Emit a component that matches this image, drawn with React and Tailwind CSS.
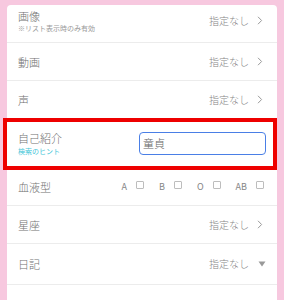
import React from "react";

const Chevron = () => (
  <svg width="6" height="9" viewBox="0 0 6 9" className="ml-[8px]">
    <polyline points="1,0.8 4.6,4.5 1,8.2" fill="none" stroke="#999" strokeWidth="1" />
  </svg>
);

const Tri = () => (
  <svg width="8" height="6" viewBox="0 0 8 6" className="ml-[9px]">
    <polygon points="0.5,0.5 7.5,0.5 4,5.5" fill="#999" />
  </svg>
);

const Value = ({ tri }) => (
  <div className="flex items-center">
    <span className="text-[10px] leading-[14px] text-[#858585] font-light">指定なし</span>
    {tri ? <Tri /> : <Chevron />}
  </div>
);

const Box = () => (
  <span className="inline-block w-[8px] h-[8px] border border-[#bdbdbd] rounded-[1px] bg-white ml-[9px] mb-[4px]" />
);

export default function App() {
  return (
    <div
      className="w-[284px] h-[300px] bg-[#f7c8df] overflow-hidden pt-[5px] px-[7px]"
      style={{ fontFamily: '"Noto Sans CJK JP", "Noto Sans", sans-serif' }}
    >
      <div className="bg-white rounded-t-[4px] h-[400px]">
        <div className="h-[38px] border-b border-[#ececec] flex items-center justify-between pl-[11px] pr-[14px] pb-[6px]">
          <div className="flex flex-col">
            <span className="text-[11px] leading-[14px] text-[#717171] font-light">画像</span>
            <span className="text-[7px] leading-[10px] text-[#9a9a9a]">※リスト表示時のみ有効</span>
          </div>
          <Value />
        </div>
        <div className="h-[38px] border-b border-[#ececec] flex items-center justify-between pl-[11px] pr-[14px]">
          <span className="text-[11px] leading-[14px] text-[#717171] font-light">動画</span>
          <Value />
        </div>
        <div className="h-[38px] border-b border-[#ececec] flex items-center justify-between pl-[11px] pr-[14px]">
          <span className="text-[11px] leading-[14px] text-[#717171] font-light">声</span>
          <Value />
        </div>
        <div className="relative h-[50px] border-b border-[#ececec] flex items-center justify-between pl-[11px] pr-[11px]">
          <div className="flex flex-col">
            <span className="text-[11px] leading-[15px] text-[#717171] font-light">自己紹介</span>
            <span className="text-[7px] leading-[10px] text-[#3fc6d8]">検索のヒント</span>
          </div>
          <div className="w-[127px] h-[23px] border border-[#4a7fe6] rounded-[4px] flex items-center pl-[3px] text-[11px] text-[#666] font-light">
            童貞
          </div>
          <div className="absolute left-[-4px] right-0 top-[-1px] bottom-[-2px] border-[4px] border-[#ee0000] pointer-events-none" />
        </div>
        <div className="h-[37px] border-b border-[#ececec] flex items-center justify-between pl-[11px] pr-[13px]">
          <span className="text-[11px] leading-[14px] text-[#717171] font-light">血液型</span>
          <div className="flex items-center text-[9px] leading-[12px] text-[#858585]">
            <span className="flex items-end">A<Box /></span>
            <span className="flex items-end ml-[15px]">B<Box /></span>
            <span className="flex items-end ml-[15px]">O<Box /></span>
            <span className="flex items-end ml-[15px]">AB<Box /></span>
          </div>
        </div>
        <div className="h-[38px] border-b border-[#ececec] flex items-center justify-between pl-[11px] pr-[14px]">
          <span className="text-[11px] leading-[14px] text-[#717171] font-light">星座</span>
          <Value />
        </div>
        <div className="h-[41px] border-b border-[#ececec] flex items-center justify-between pl-[11px] pr-[11px]">
          <span className="text-[11px] leading-[14px] text-[#717171] font-light">日記</span>
          <Value tri />
        </div>
      </div>
    </div>
  );
}
